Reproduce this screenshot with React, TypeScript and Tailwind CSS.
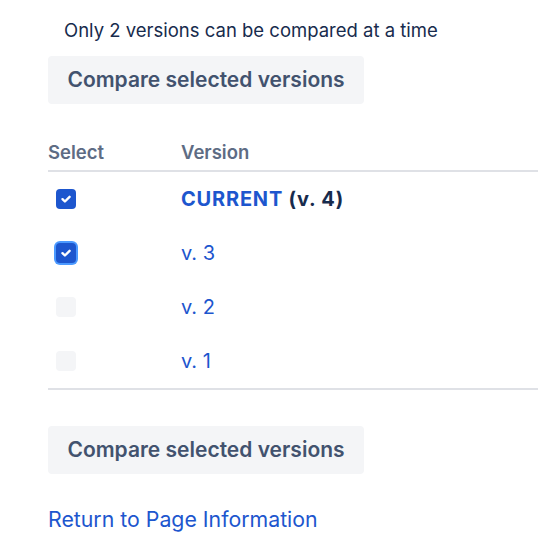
import React, { useState } from 'react';

const versions = [
  { id: 4, current: true },
  { id: 3, current: false },
  { id: 2, current: false },
  { id: 1, current: false },
];

const Check: React.FC<{ checked: boolean; focused?: boolean; onClick: () => void }> = ({ checked, focused, onClick }) => (
  <button
    onClick={onClick}
    className={`flex items-center justify-center w-5 h-5 rounded-[4px] ${
      checked ? 'bg-[#1D56CE]' : 'bg-[#F4F5F7]'
    } ${focused ? 'ring-2 ring-[#4C9AFF]' : ''}`}
  >
    {checked && (
      <svg className="w-3 h-3" viewBox="0 0 12 12" fill="none">
        <path d="M2.5 6.2l2.4 2.3L9.6 3.8" stroke="white" strokeWidth={2.4} strokeLinecap="round" strokeLinejoin="round" />
      </svg>
    )}
  </button>
);

const CompareButton: React.FC = () => (
  <button className="h-12 w-[316px] rounded-[4px] bg-[#F4F5F7] text-[21px] font-semibold text-[#42526E]">
    Compare selected versions
  </button>
);

export default function App() {
  const [selected, setSelected] = useState<number[]>([4, 3]);

  const toggle = (id: number) => {
    setSelected((s) => (s.includes(id) ? s.filter((x) => x !== id) : [...s, id]));
  };

  return (
    <div className="min-h-screen bg-white pl-12 pt-[18px] font-['Inter','Noto_Sans',sans-serif]">
      <p className="pl-4 text-[18.5px] leading-6 text-[#172B4D]">Only 2 versions can be compared at a time</p>

      <div className="mt-[14px]">
        <CompareButton />
      </div>

      <div className="mt-6">
        <div className="flex h-[44px] items-end border-b-2 border-[#DFE1E6] pb-[6px] text-[18.5px] leading-6 font-semibold text-[#5E6C84]">
          <div className="w-[133px]">Select</div>
          <div>Version</div>
        </div>
        <div className="border-b-2 border-[#DFE1E6]">
          {versions.map((v) => (
            <div key={v.id} className="flex h-[54px] items-center">
              <div className="w-[133px] pl-2">
                <Check checked={selected.includes(v.id)} focused={v.id === 3} onClick={() => toggle(v.id)} />
              </div>
              <div className="text-[20px] leading-6">
                {v.current ? (
                  <span className="font-bold tracking-[0.8px]">
                    <a href="#" className="text-[#1D56CE]">CURRENT</a>
                    <span className="text-[#172B4D]"> (v. {v.id})</span>
                  </span>
                ) : (
                  <a href="#" className="text-[#1D56CE]">v. {v.id}</a>
                )}
              </div>
            </div>
          ))}
        </div>
      </div>

      <div className="mt-9">
        <CompareButton />
      </div>

      <a href="#" className="mt-[33px] block text-[21.3px] leading-6 text-[#1D56CE]">
        Return to Page Information
      </a>
    </div>
  );
}
